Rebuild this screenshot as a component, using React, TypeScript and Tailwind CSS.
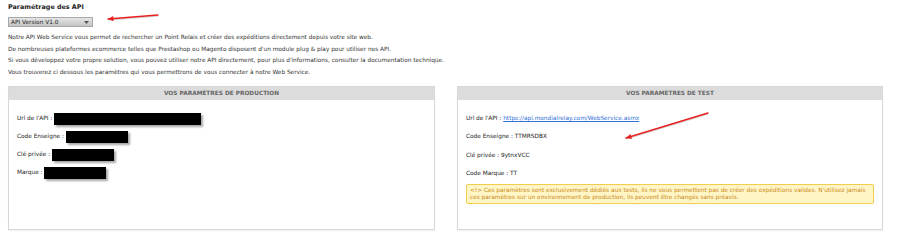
import React from "react";

const font = { fontFamily: '"DejaVu Sans", Verdana, sans-serif' };

function Redacted({ w }: { w: number }) {
  return (
    <span
      className="inline-block h-[12px] bg-black align-middle shadow-[2px_2px_2px_rgba(0,0,0,0.35)]"
      style={{ width: w }}
    />
  );
}

function Arrow({ x1, y1, x2, y2 }: { x1: number; y1: number; x2: number; y2: number }) {
  const ang = Math.atan2(y2 - y1, x2 - x1);
  const l = 6;
  const a1 = ang + Math.PI - 0.45;
  const a2 = ang + Math.PI + 0.45;
  return (
    <g>
      <line x1={x1} y1={y1 + 1} x2={x2} y2={y2 + 1} stroke="rgba(0,0,0,0.15)" strokeWidth={1.6} />
      <line x1={x1} y1={y1} x2={x2} y2={y2} stroke="#e62020" strokeWidth={1.4} strokeLinecap="round" />
      <polygon
        points={`${x2},${y2} ${x2 + l * Math.cos(a1)},${y2 + l * Math.sin(a1)} ${x2 + l * Math.cos(a2)},${y2 + l * Math.sin(a2)}`}
        fill="#e62020"
      />
    </g>
  );
}

export default function App() {
  return (
    <div className="relative h-[242px] w-[900px] overflow-hidden bg-white text-[5.8px] text-[#333]" style={font}>
      <div className="px-[8px] pt-[4px]">
        <div className="h-[7px] text-[6.4px] font-bold leading-[7px] text-[#222]">Paramétrage des API</div>

        {/* select */}
        <div className="mt-[6px] flex h-[10px] w-[85px] items-center justify-between border border-[#a8a8a8] bg-gradient-to-b from-[#e6e6e6] to-[#c4c4c4] pl-[2px] pr-[3px] text-[5.8px] text-[#222]">
          <span>API Version V1.0</span>
          <svg width="5" height="3" viewBox="0 0 5 3">
            <path d="M0 0 L5 0 L2.5 3 Z" fill="#555" />
          </svg>
        </div>

        <div className="mt-[5px] leading-[11.7px]">
          <p>Notre API Web Service vous permet de rechercher un Point Relais et créer des expéditions directement depuis votre site web.</p>
          <p>De nombreuses plateformes ecommerce telles que Prestashop ou Magento disposent d'un module plug &amp; play pour utiliser nos API.</p>
          <p>Si vous développez votre propre solution, vous pouvez utiliser notre API directement, pour plus d'informations, consulter la documentation technique.</p>
          <p>Vous trouverez ci dessous les paramètres qui vous permettrons de vous connecter à notre Web Service.</p>
        </div>

        <div className="mt-[7px] flex gap-[22px]">
          {/* production */}
          <div className="h-[144px] w-[427px] border border-[#d8d8d8] shadow-[0_1px_1px_rgba(0,0,0,0.05)]">
            <div className="flex h-[13px] items-center justify-center bg-[#dcdcdc] font-bold text-[#666]">
              VOS PARAMÈTRES DE PRODUCTION
            </div>
            <div className="px-[8px] pt-[10px] text-[#222]">
              <div className="flex h-[18px] items-center">
                Url de l'API :&nbsp;<Redacted w={147} />
              </div>
              <div className="flex h-[18px] items-center">
                Code Enseigne :&nbsp;<Redacted w={62} />
              </div>
              <div className="flex h-[18px] items-center">
                Clé privée :&nbsp;<Redacted w={62} />
              </div>
              <div className="flex h-[18px] items-center">
                Marque :&nbsp;<Redacted w={62} />
              </div>
            </div>
          </div>

          {/* test */}
          <div className="h-[144px] w-[426px] border border-[#d8d8d8] shadow-[0_1px_1px_rgba(0,0,0,0.05)]">
            <div className="flex h-[13px] items-center justify-center bg-[#dcdcdc] font-bold text-[#666]">
              VOS PARAMÈTRES DE TEST
            </div>
            <div className="px-[8px] pt-[9px] text-[#222]">
              <div className="flex h-[18.5px] items-center">
                Url de l'API :&nbsp;
                <span className="text-[#2f6fd6] underline">https://api.mondialrelay.com/WebService.asmx</span>
              </div>
              <div className="flex h-[18.5px] items-center">Code Enseigne : TTMRSDBX</div>
              <div className="flex h-[18.5px] items-center">Clé privée : 9ytnxVCC</div>
              <div className="flex h-[18.5px] items-center">Code Marque : TT</div>
              <div className="mt-[1px] rounded-[2px] border border-[#f3cd4f] bg-[#fff5c5] px-[3px] py-[2px] leading-[7.3px] text-[#c98a1a]">
                &lt;!&gt; Ces paramètres sont exclusivement dédiés aux tests, ils ne vous permettent pas de créer des expéditions valides. N'utilisez jamais
                <br />
                ces paramètres sur un environnement de production, ils peuvent être changés sans préavis.
              </div>
            </div>
          </div>
        </div>
      </div>

      {/* annotation arrows */}
      <svg className="pointer-events-none absolute left-0 top-0" width="900" height="242">
        <Arrow x1={158} y1={15} x2={108} y2={19} />
        <Arrow x1={708} y1={113} x2={626} y2={138} />
      </svg>
    </div>
  );
}
